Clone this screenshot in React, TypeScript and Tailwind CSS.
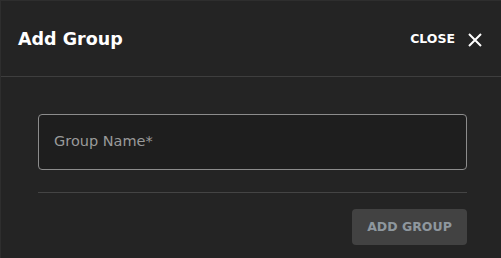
import React from "react";

export default function App() {
  return (
    <div className="w-[501px] h-[258px] bg-[#242424] border-l border-t border-[#2e2e2e] flex flex-col overflow-hidden" style={{ fontFamily: '"DejaVu Sans", sans-serif' }}>
      <div className="h-[76px] flex items-center justify-between pl-[17px] pr-[19px] pt-[2px] border-b border-[#3e3e3e]">
        <div className="text-[17.5px] font-bold text-white">Add Group</div>
        <div className="flex items-center gap-[13px]">
          <span className="text-[12.5px] font-bold text-white">CLOSE</span>
          <svg width="14" height="14" viewBox="0 0 14 14" className="text-white">
            <path d="M1 1 L13 13 M13 1 L1 13" stroke="currentColor" strokeWidth="2" fill="none" />
          </svg>
        </div>
      </div>
      <div className="flex flex-col pl-[37px] pr-[34px] pt-[37px]">
        <div className="h-[56px] rounded-[4px] border border-[#8c8c8c] bg-[#1e1e1e] flex items-center px-[15px]">
          <span className="text-[14.5px] text-[#9a9a9a]">Group Name*</span>
        </div>
        <div className="mt-[22px] h-px bg-[#444444]" />
        <div className="mt-[16px] flex justify-end">
          <div className="w-[115px] h-[36px] rounded-[4px] bg-[#424242] flex items-center justify-center text-[12.5px] font-bold text-[#8e979e]">
            ADD GROUP
          </div>
        </div>
      </div>
    </div>
  );
}
